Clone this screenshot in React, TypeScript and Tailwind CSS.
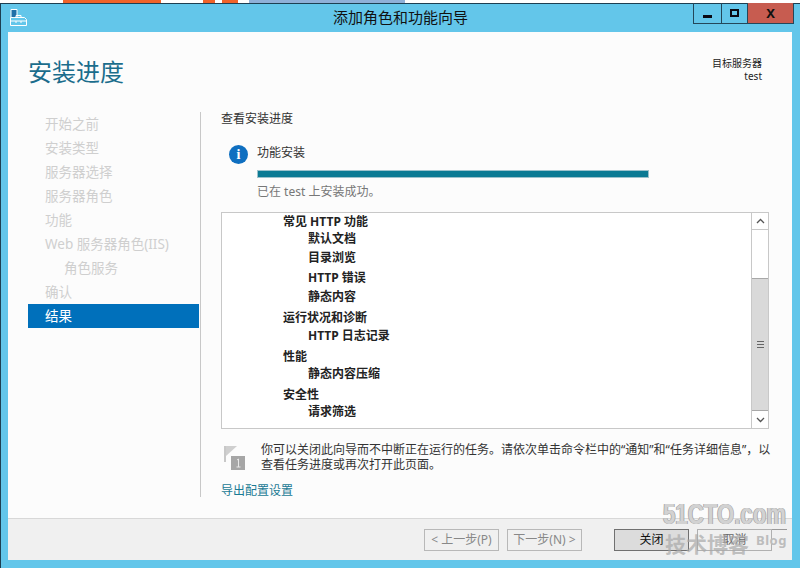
const navItems = [
  { label: '开始之前', indent: 'pl-[17px]' },
  { label: '安装类型', indent: 'pl-[17px]' },
  { label: '服务器选择', indent: 'pl-[17px]' },
  { label: '服务器角色', indent: 'pl-[17px]' },
  { label: '功能', indent: 'pl-[17px]' },
  { label: 'Web 服务器角色(IIS)', indent: 'pl-[17px]' },
  { label: '角色服务', indent: 'pl-[36px]' },
  { label: '确认', indent: 'pl-[17px]' },
];

const rows = [
  { text: '常见 HTTP 功能', cls: 'pl-[61px]' },
  { text: '默认文档', cls: 'pl-[86px] mt-[1px]' },
  { text: '目录浏览', cls: 'pl-[86px] mt-[3px]' },
  { text: 'HTTP 错误', cls: 'pl-[86px] mt-[4px]' },
  { text: '静态内容', cls: 'pl-[86px] mt-[3px]' },
  { text: '运行状况和诊断', cls: 'pl-[61px] mt-[5px]' },
  { text: 'HTTP 日志记录', cls: 'pl-[86px] mt-[2px]' },
  { text: '性能', cls: 'pl-[61px] mt-[5px]' },
  { text: '静态内容压缩', cls: 'pl-[86px] mt-[1px]' },
  { text: '安全性', cls: 'pl-[61px] mt-[5px]' },
  { text: '请求筛选', cls: 'pl-[86px] mt-[1px]' },
];

function AppIcon() {
  return (
    <svg width="17" height="17" viewBox="0 0 17 17" fill="none">
      <path d="M1 0.5h6v8H1z" fill="#1f6fa8" stroke="#fff" />
      <path d="M0.5 8.5v8h16v-6l-2-2h-10l-1 0z" fill="#63c6ea" stroke="#fff" />
      <path d="M6 8.5v-2h5v2M1 12h15M6 12v2M11 12v2" stroke="#fff" />
    </svg>
  );
}

function NoticeIcon() {
  return (
    <svg width="23" height="26" viewBox="0 0 23 26" fill="none">
      <path d="M1 1v16" stroke="#c8c8c8" strokeWidth="2" />
      <path d="M2 1h11l-11 10z" fill="#cfcfcf" />
      <rect x="7" y="11" width="14" height="14" fill="#a6a6a6" />
      <path d="M13 15l1.5-1v8M12.5 22h4" stroke="#e8e8e8" />
    </svg>
  );
}

function Button({ label, cls }: { label: string; cls: string }) {
  return (
    <div className={`w-[75px] h-[22px] flex items-center justify-center border text-[12px] ${cls}`}>
      {label}
    </div>
  );
}

export default function App() {
  return (
    <div className="relative w-[800px] h-[568px] overflow-hidden bg-white flex flex-col font-['Noto_Sans','Noto_Sans_CJK_SC',sans-serif] text-[#333]">
      {/* Strip of the desktop behind the window */}
      <div className="h-[3px] flex bg-white shrink-0">
        <div className="w-[63px]" />
        <div className="w-[98px] bg-[#f0632a]" />
        <div className="w-[42px]" />
        <div className="w-[12px] bg-[#f0632a]" />
        <div className="w-[7px]" />
        <div className="w-[16px] bg-[#f0632a]" />
        <div className="w-[11px]" />
        <div className="w-[156px] bg-[#8fb0d8]" />
      </div>

      {/* Window frame */}
      <div className="relative flex-1 flex flex-col bg-[#63c6ea] border-t border-l border-[#1d3f52]">
        <div className="h-[28px] shrink-0 relative flex items-center justify-center pb-[2px] text-[15px] text-[#111]">
          <div className="absolute left-[9px] top-[5px]">
            <AppIcon />
          </div>
          <span>添加角色和功能向导</span>
          <div className="absolute right-[6px] top-[-1px] flex h-[21px] border border-t-0 border-[#24475a]">
            <div className="w-[28px] flex items-end justify-center pb-[5px] border-r border-[#24475a]">
              <div className="w-[9px] h-[3px] bg-[#0a0a14]" />
            </div>
            <div className="w-[26px] flex items-center justify-center border-r border-[#24475a]">
              <div className="w-[9px] h-[8px] border-2 border-[#0a0a14]" />
            </div>
            <div className="w-[45px] flex items-center justify-center bg-[#c75c50] text-[13px] font-bold text-[#111] leading-none">
              X
            </div>
          </div>
        </div>

        {/* Client area */}
        <div className="ml-[7px] mr-[8px] mb-[8px] flex-1 flex flex-col bg-[#fcfcfc]">
          {/* Header */}
          <div className="h-[80px] shrink-0 flex justify-between pl-[20px] pr-[30px]">
            <h1 className="text-[24px] leading-none mt-[28px] text-[#1b6d8c]">安装进度</h1>
            <div className="mt-[25px] text-right text-[10px] leading-[13px] text-[#222]">
              <div>目标服务器</div>
              <div>test</div>
            </div>
          </div>

          {/* Body */}
          <div className="flex-1 flex">
            <nav className="w-[192px] shrink-0 pl-[20px] pr-[1px] text-[13.5px] text-[#cfcfcf]">
              {navItems.map((item) => (
                <div key={item.label} className={`h-[24px] flex items-center ${item.indent}`}>
                  {item.label}
                </div>
              ))}
              <div className="h-[24px] flex items-center pl-[17px] bg-[#0070bb] text-white">结果</div>
            </nav>

            <div className="w-px h-[385px] bg-[#c8c8c8] shrink-0" />

            <main className="flex-1 pl-[20px] pr-[23px] flex flex-col">
              <div className="h-[14px] flex items-center text-[12px] text-[#333]">查看安装进度</div>

              <div className="relative mt-[19px] pl-[36px]">
                <div className="absolute left-[8px] top-[0px] w-[19px] h-[19px] rounded-full bg-[#0f6fc0] flex items-center justify-center text-white text-[14px] font-bold leading-none font-['Liberation_Serif',serif]">
                  i
                </div>
                <div className="text-[12px] leading-[16px] text-[#333]">功能安装</div>
                <div className="mt-[9px] w-[392px] h-[8px] bg-[#0b7a94] border border-[#9cc2cc]" />
                <div className="mt-[6px] text-[12px] leading-[16px] text-[#777]">已在 test 上安装成功。</div>
              </div>

              {/* Feature list */}
              <div className="mt-[12px] h-[217px] w-[548px] shrink-0 flex bg-white border border-[#c8c8c8]">
                <div className="flex-1 overflow-hidden pt-[1px] text-[12px] font-bold text-[#222]">
                  {rows.map((r) => (
                    <div key={r.text} className={`h-[16px] flex items-center ${r.cls}`}>
                      {r.text}
                    </div>
                  ))}
                </div>
                <div className="w-[17px] shrink-0 flex flex-col border-l border-[#c8c8c8] bg-white">
                  <div className="h-[17px] flex items-center justify-center border-b border-[#c8c8c8]">
                    <svg width="9" height="6" viewBox="0 0 9 6" fill="none">
                      <path d="M1 5l3.5-3.5L8 5" stroke="#555" strokeWidth="1.3" />
                    </svg>
                  </div>
                  <div className="h-[48px]" />
                  <div className="flex-1 flex items-center justify-center bg-[#d9d9d9] border-y border-[#a8a8a8]">
                    <div className="w-[7px] h-[7px] border-y border-[#666] flex items-center">
                      <div className="w-full h-px bg-[#666]" />
                    </div>
                  </div>
                  <div className="h-[17px] flex items-center justify-center">
                    <svg width="9" height="6" viewBox="0 0 9 6" fill="none">
                      <path d="M1 1l3.5 3.5L8 1" stroke="#555" strokeWidth="1.3" />
                    </svg>
                  </div>
                </div>
              </div>

              {/* Notice */}
              <div className="mt-[13px] flex">
                <div className="w-[40px] pl-[3px] pt-[3px] shrink-0">
                  <NoticeIcon />
                </div>
                <p className="w-[516px] text-[12px] leading-[15px] text-[#333]">
                  你可以关闭此向导而不中断正在运行的任务。请依次单击命令栏中的“通知”和“任务详细信息”，以查看任务进度或再次打开此页面。
                </p>
              </div>

              <div className="mt-[11px] text-[12px] leading-[16px] text-[#1a7a94]">导出配置设置</div>
            </main>
          </div>

          {/* Footer */}
          <div className="h-[42px] shrink-0 bg-[#f0f0f0] border-t border-[#d8d8d8] flex items-center pl-[416px] pr-[20px]">
            <Button label="< 上一步(P)" cls="border-[#b8b8b8] text-[#888]" />
            <Button label="下一步(N) >" cls="ml-[8px] border-[#b8b8b8] text-[#888]" />
            <Button label="关闭" cls="ml-[32px] border-[#707070] bg-[#dcdcdc] text-[#111]" />
            <Button label="取消" cls="ml-[8px] border-[#b0b0b0] text-[#666]" />
          </div>
        </div>
      </div>

      {/* Site watermark */}
      <div className="absolute left-[663px] top-[499px] origin-left scale-x-[0.74] whitespace-nowrap text-[30px] font-bold leading-[30px] text-[#d2d2d2] font-['Liberation_Sans',sans-serif] [text-shadow:1px_0_0_#a4a4a4,-1px_0_0_#a4a4a4]">
        51CTO.com
      </div>
      <div className="absolute left-[772px] top-[529px] w-[15px] h-px bg-[#9a9a9a]" />
      <div className="absolute left-[665px] top-[531px] whitespace-nowrap text-[21px] font-bold leading-[26px] text-[#a8a8a8]/70">
        技术博客
      </div>
      <div className="absolute left-[756px] top-[531px] text-[13px] font-bold leading-[18px] tracking-[0.5px] text-[#bcbcbc]">Blog</div>
    </div>
  );
}
